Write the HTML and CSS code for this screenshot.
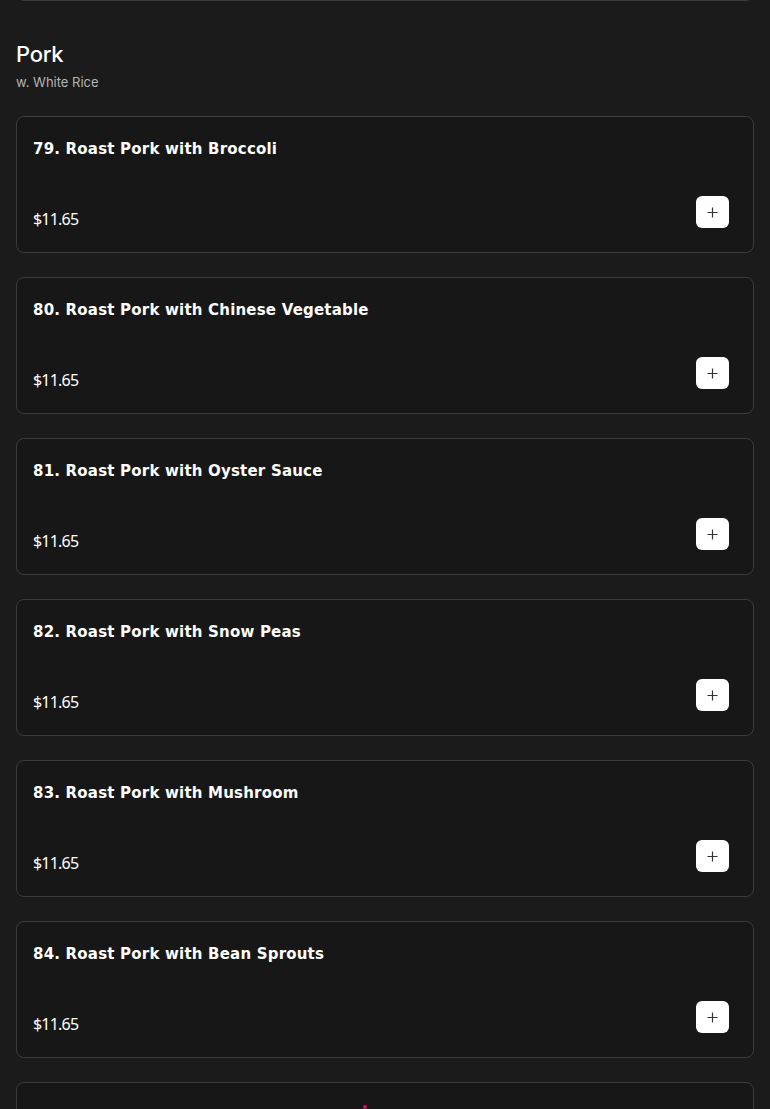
FILE: index.html
```html
<!DOCTYPE html>
<html lang="en">
<head>
    <meta charset="UTF-8">
    <title>Menu - Pork</title>
    <link rel="stylesheet" href="styles.css">
</head>
<body>

<div class="menu">
    <div class="item item-prev"></div>

    <div class="section-head">
        <h2>Pork</h2>
        <p class="sub">w. White Rice</p>
    </div>

    <div class="item">
        <div class="name">79. Roast Pork with Broccoli</div>
        <div class="row">
            <span class="price">$11.65</span>
            <button class="add" aria-label="Add"><svg width="11" height="11" viewBox="0 0 11 11"><path d="M5.5 0.5v10M0.5 5.5h10" stroke="#333" stroke-width="1.2"/></svg></button>
        </div>
    </div>

    <div class="item">
        <div class="name">80. Roast Pork with Chinese Vegetable</div>
        <div class="row">
            <span class="price">$11.65</span>
            <button class="add" aria-label="Add"><svg width="11" height="11" viewBox="0 0 11 11"><path d="M5.5 0.5v10M0.5 5.5h10" stroke="#333" stroke-width="1.2"/></svg></button>
        </div>
    </div>

    <div class="item">
        <div class="name">81. Roast Pork with Oyster Sauce</div>
        <div class="row">
            <span class="price">$11.65</span>
            <button class="add" aria-label="Add"><svg width="11" height="11" viewBox="0 0 11 11"><path d="M5.5 0.5v10M0.5 5.5h10" stroke="#333" stroke-width="1.2"/></svg></button>
        </div>
    </div>

    <div class="item">
        <div class="name">82. Roast Pork with Snow Peas</div>
        <div class="row">
            <span class="price">$11.65</span>
            <button class="add" aria-label="Add"><svg width="11" height="11" viewBox="0 0 11 11"><path d="M5.5 0.5v10M0.5 5.5h10" stroke="#333" stroke-width="1.2"/></svg></button>
        </div>
    </div>

    <div class="item">
        <div class="name">83. Roast Pork with Mushroom</div>
        <div class="row">
            <span class="price">$11.65</span>
            <button class="add" aria-label="Add"><svg width="11" height="11" viewBox="0 0 11 11"><path d="M5.5 0.5v10M0.5 5.5h10" stroke="#333" stroke-width="1.2"/></svg></button>
        </div>
    </div>

    <div class="item">
        <div class="name">84. Roast Pork with Bean Sprouts</div>
        <div class="row">
            <span class="price">$11.65</span>
            <button class="add" aria-label="Add"><svg width="11" height="11" viewBox="0 0 11 11"><path d="M5.5 0.5v10M0.5 5.5h10" stroke="#333" stroke-width="1.2"/></svg></button>
        </div>
    </div>

    <div class="item item-next">
        <span class="dot"></span>
    </div>
</div>

</body>
</html>
```

FILE: styles.css
```css
body {
    margin: 0;
    background: #1b1b1b;
    color: #fff;
    font-family: "DejaVu Sans", "Noto Sans", sans-serif;
    overflow: hidden;
}

.menu {
    padding: 0 16px;
    display: flex;
    flex-direction: column;
    gap: 24px;
}

.item {
    background: #171717;
    border: 1px solid #3c3c3c;
    border-radius: 8px;
    padding: 21px 24px 23px 16px;
    display: flex;
    flex-direction: column;
    gap: 37px;
    height: 137px;
    box-sizing: border-box;
}

.item-prev {
    height: 40px;
    margin-top: -39px;
    margin-bottom: -24px;
    padding: 0;
}

.item-next {
    height: 80px;
    position: relative;
}

.dot {
    position: absolute;
    left: 346px;
    top: 22px;
    width: 4px;
    height: 4px;
    border-radius: 50%;
    background: #c2185b;
}

.section-head {
    padding-top: 39px;
    margin-bottom: 2px;
}

.section-head h2 {
    margin: 0;
    font-family: "Inter", "Noto Sans", sans-serif;
    font-weight: 500;
    font-size: 22px;
    line-height: 28px;
    letter-spacing: -0.3px;
}

.section-head .sub {
    margin: 6px 0 0 0;
    font-family: "Inter", "Noto Sans", sans-serif;
    font-size: 13px;
    color: #b5b5b5;
    line-height: 16px;
}

.name {
    font-size: 15px;
    font-weight: bold;
    line-height: 22px;
    letter-spacing: 0.2px;
}

.row {
    display: flex;
    justify-content: space-between;
    align-items: flex-end;
}

.price {
    font-size: 16px;
    line-height: 20px;
    font-family: "Noto Sans", sans-serif;
    letter-spacing: -0.8px;
}

.add {
    width: 33px;
    height: 32px;
    background: #fff;
    border: none;
    border-radius: 6px;
    display: flex;
    align-items: center;
    justify-content: center;
    padding: 0;
    cursor: pointer;
    position: relative;
    top: -1px;
}
```
